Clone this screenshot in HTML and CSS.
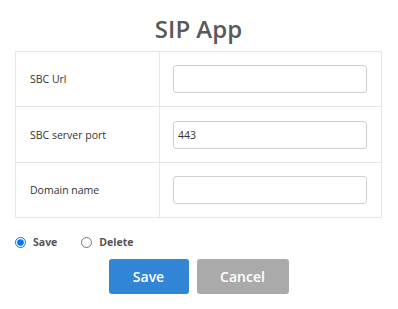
FILE: index.html
```html
<!DOCTYPE html>
<html lang="en">
<head>
  <meta charset="UTF-8" />
  <title>SIP App</title>
  <link rel="stylesheet" href="styles.css">
</head>
<body>
  <div class="popup">
    <h2 class="title">SIP App</h2>
    <table class="form-table">
      <tr>
        <td class="label">SBC Url</td>
        <td class="field"><input type="text" id="sbc_url" value=""></td>
      </tr>
      <tr>
        <td class="label">SBC server port</td>
        <td class="field"><input type="text" id="sbc_port" value="443"></td>
      </tr>
      <tr>
        <td class="label">Domain name</td>
        <td class="field"><input type="text" id="domain" value=""></td>
      </tr>
    </table>
    <div class="action-row">
      <label class="radio"><input type="radio" name="action" value="save" checked><span>Save</span></label>
      <label class="radio"><input type="radio" name="action" value="delete"><span>Delete</span></label>
    </div>
    <div class="btn-row">
      <button class="btn btn-save">Save</button>
      <button class="btn btn-cancel">Cancel</button>
    </div>
  </div>
</body>
</html>
```

FILE: styles.css
```css
:root {
  --blue: #3085d6;
  --grey: #aaa;
  --border: #e6e6e6;
  --text: #333;
  --title: #595959;
}
body {
  margin: 0;
  background: #fff;
  font-family: 'Open Sans', 'Noto Sans', Arial, sans-serif;
}
.popup { padding: 0 16px 0 15px; }
.title {
  margin: 12px 0 6px 0;
  font-size: 24px; line-height: 33px;
  font-weight: 600;
  color: var(--title);
  text-align: center;
}
.form-table {
  width: 100%;
  border-collapse: collapse;
  border: 1px solid var(--border);
}
.form-table td {
  border: 1px solid var(--border);
  height: 54.4px;
  padding: 0;
  vertical-align: middle;
}
.form-table .label {
  width: 129px;
  padding-left: 14px;
  font-size: 10.5px;
  color: var(--text);
}
.form-table .field { padding: 0 14px 0 13px; }
.field input {
  display: block;
  width: 100%; height: 28px;
  box-sizing: border-box;
  border: 1px solid #cdd0d6;
  border-radius: 3px;
  padding: 0 4px;
  font-family: inherit;
  font-size: 10.5px;
  color: var(--text);
}
.action-row {
  display: flex; align-items: center; gap: 24px;
  margin: 17px 0 0 0;
  height: 14px;
}
.radio {
  display: flex; align-items: center; gap: 7px;
  font-size: 10.5px; font-weight: 700;
  color: #555;
}
.radio input { margin: 0; width: 11px; height: 11px; }
.btn-row {
  display: flex; justify-content: center; gap: 8px;
  margin-top: 10px;
}
.btn {
  height: 35px;
  border: none; border-radius: 3px;
  color: #fff;
  font-family: inherit; font-size: 14px; font-weight: 600;
  cursor: pointer;
}
.btn-save { width: 80px; background: var(--blue); }
.btn-cancel { width: 92px; background: var(--grey); }
```
